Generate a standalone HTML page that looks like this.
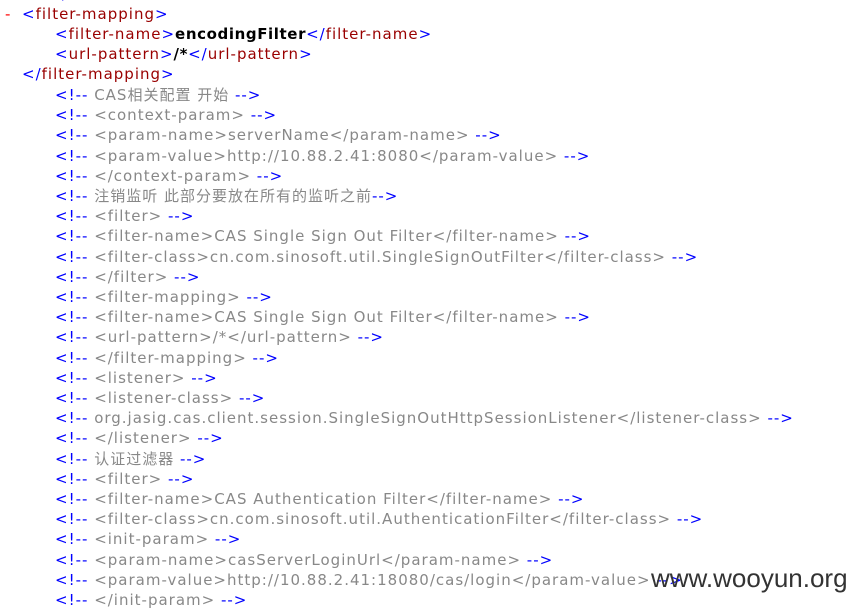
<!DOCTYPE html>
<html><head><meta charset="utf-8"><style>
body{margin:0;width:858px;height:609px;background:#fff;overflow:hidden;position:relative;font-family:"DejaVu Sans","Verdana","Noto Sans CJK SC",sans-serif;font-size:15px;}
.l{position:absolute;white-space:pre;line-height:20px;letter-spacing:1px}
.b{color:#0000ff}.m{color:#990000}.g{color:#888}.k{color:#000;font-weight:bold;letter-spacing:0.6px}.r{color:#f00}
.wm{position:absolute;left:651px;top:563px;font-family:"Liberation Sans",sans-serif;font-size:26px;color:#333;white-space:pre}
</style></head><body>
<div class="l b" style="left:62px;top:-16px">/</div>
<div class="l" style="left:5px;top:4px"><span class="r">-</span></div>
<div class="l" style="left:22px;top:4px"><span class="b">&lt;</span><span class="m">filter-mapping</span><span class="b">&gt;</span></div>
<div class="l" style="left:55px;top:24px"><span class="b">&lt;</span><span class="m">filter-name</span><span class="b">&gt;</span><span class="k">encodingFilter</span><span class="b">&lt;/</span><span class="m">filter-name</span><span class="b">&gt;</span></div>
<div class="l" style="left:55px;top:44px"><span class="b">&lt;</span><span class="m">url-pattern</span><span class="b">&gt;</span><span class="k">/*</span><span class="b">&lt;/</span><span class="m">url-pattern</span><span class="b">&gt;</span></div>
<div class="l" style="left:22px;top:64px"><span class="b">&lt;/</span><span class="m">filter-mapping</span><span class="b">&gt;</span></div>
<div id="c"></div>
<script>
var L=["CAS相关配置 开始","&lt;context-param&gt;","&lt;param-name&gt;serverName&lt;/param-name&gt;","&lt;param-value&gt;http://10.88.2.41:8080&lt;/param-value&gt;","&lt;/context-param&gt;","注销监听 此部分要放在所有的监听之前","&lt;filter&gt;","&lt;filter-name&gt;CAS Single Sign Out Filter&lt;/filter-name&gt;","&lt;filter-class&gt;cn.com.sinosoft.util.SingleSignOutFilter&lt;/filter-class&gt;","&lt;/filter&gt;","&lt;filter-mapping&gt;","&lt;filter-name&gt;CAS Single Sign Out Filter&lt;/filter-name&gt;","&lt;url-pattern&gt;/*&lt;/url-pattern&gt;","&lt;/filter-mapping&gt;","&lt;listener&gt;","&lt;listener-class&gt;","org.jasig.cas.client.session.SingleSignOutHttpSessionListener&lt;/listener-class&gt;","&lt;/listener&gt;","认证过滤器","&lt;filter&gt;","&lt;filter-name&gt;CAS Authentication Filter&lt;/filter-name&gt;","&lt;filter-class&gt;cn.com.sinosoft.util.AuthenticationFilter&lt;/filter-class&gt;","&lt;init-param&gt;","&lt;param-name&gt;casServerLoginUrl&lt;/param-name&gt;","&lt;param-value&gt;http://10.88.2.41:18080/cas/login&lt;/param-value&gt;","&lt;/init-param&gt;"];
var h="";for(var i=0;i<L.length;i++){var sep=(i==5)?"":" ";h+='<div class="l" style="left:55px;top:'+(85+20.2*i).toFixed(1)+'px"><span class="b">&lt;!--</span><span class="g"> '+L[i]+sep+'</span><span class="b">--&gt;</span></div>';}
document.getElementById("c").innerHTML=h;
</script>
<div class="wm">www.wooyun.org</div>
</body></html>
